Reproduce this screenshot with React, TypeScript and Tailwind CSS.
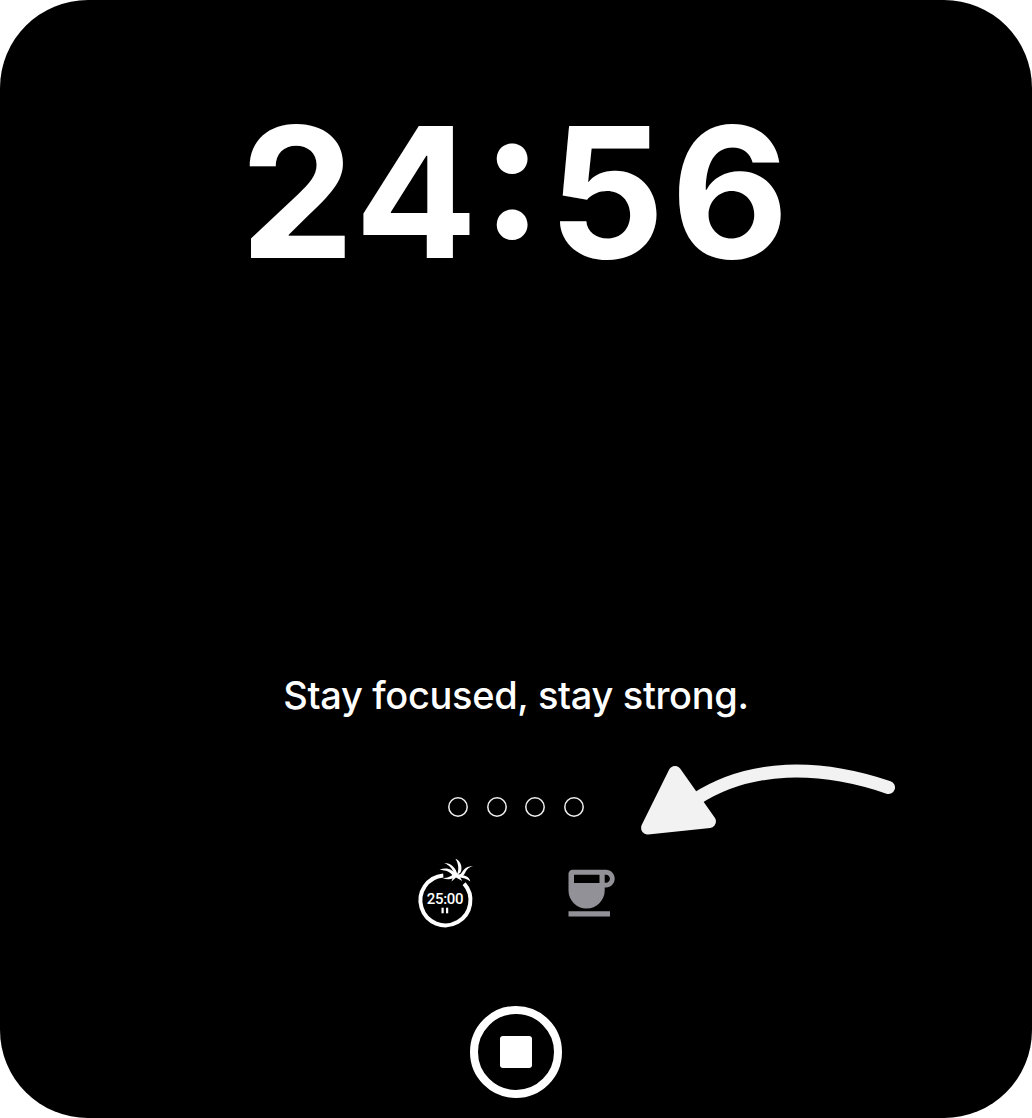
function TomatoIcon() {
  return (
    <svg className="overflow-visible" width="60" height="72" viewBox="415 857 60 72" fill="none" aria-hidden="true">
      <path d="M444.300 875.400A25 25 0 1 0 465.100 883.700" stroke="#fff" strokeWidth="4" />
      <g fill="#fff">
        <path d="M456.400 858.700C461 860 464.300 867 461.500 872.500L457.600 875.500C460.200 870 459.800 864 456.400 858.700Z" />
        <path d="M474.500 866.200C469 865.800 465.500 868 463.500 871.500C462 874 460 875.500 457 875.500L459 877.800C462.500 877.300 465 875.500 466.300 872.500C467.500 869.500 470 866.800 474.500 866.200Z" />
        <path d="M458.500 874.500C465 874.500 470.500 876.500 471.300 881.500C468 878.800 464 877.700 459.500 877.500Z" />
        <path d="M445 863C451.500 862.800 457 867.500 458.600 875L456 875C453.500 869 450.500 865 445 863Z" />
        <path d="M440.500 869.900C447 866.800 454 869 458.500 876L455 877C451.500 871.500 447 870 440.500 869.900Z" />
        <path d="M443.500 877.900C448.500 880 454 879.500 458 876L455 873.500C452 876.800 448 878.200 443.500 877.900Z" />
        <path d="M455 873.500L459 873.500L463.300 881L457 877.600L452.500 881.500Z" />
        <rect x="442.500" y="907.700" width="2.200" height="5.600" />
        <rect x="447" y="907.700" width="2.200" height="5.600" />
      </g>
      <text x="427.700" y="904.300" fill="#fff" fontFamily="Roboto, sans-serif" fontSize="15" fontWeight="500" letterSpacing="-0.3">25:00</text>
    </svg>
  );
}

function CupIcon() {
  return (
    <svg width="50" height="50" viewBox="566 867 50 50" aria-hidden="true">
      <path fill="#929197" fillRule="evenodd" d="M572.500 869.700H606C611 869.700 614.700 873.800 614.700 878.500C614.700 883.500 611 887.400 606 887.400H604.700V890.500C604.700 900.500 596.500 908.600 586.600 908.600C576.600 908.600 568.500 900.500 568.500 890.500V873.700C568.500 871.500 570.300 869.700 572.500 869.700ZM574 874.800V883H599.500V874.800ZM604.700 874.800V882.800H606C608.200 882.800 609.900 881 609.900 878.800C609.900 876.600 608.200 874.800 606 874.800Z" />
      <path fill="#929197" d="M568.500 911.200H610V916.600H568.500Z" />
    </svg>
  );
}

function Arrow() {
  return (
    <svg className="absolute left-[636px] top-[758px]" width="264" height="82" viewBox="636 758 264 82" fill="none" aria-hidden="true">
      <path d="M696 799C750 764 819 764 888.500 787.500" stroke="#f2f2f2" strokeWidth="13" strokeLinecap="round" />
      <path d="M675 772.500L647.500 828L709.500 821.500Z" fill="#f2f2f2" stroke="#f2f2f2" strokeWidth="13" strokeLinejoin="round" />
    </svg>
  );
}

export default function App() {
  return (
    <div className="h-[1118px] w-[1032px] overflow-hidden bg-white">
      <main className="relative flex h-full flex-col items-center rounded-[88px] bg-black font-['Inter',sans-serif] text-white">
        <h1 className="mr-[3px] mt-[102px] flex h-[180px] items-center whitespace-nowrap text-[182px] font-bold leading-[180px]">
          <span>2</span>
          <span className="mr-[4px]">4</span>
          <span className="mr-[6px] [font-feature-settings:'case']">:</span>
          <span className="mr-[6px]">5</span>
          <span>6</span>
        </h1>
        <p className="mt-[389px] h-12 whitespace-nowrap text-[38px] font-[450] leading-[48px] tracking-[-0.34px]">Stay focused, stay strong.</p>
        <div className="mt-[78px] flex gap-[18.500px]">
          {[0, 1, 2, 3].map((i) => (
            <svg key={i} className="size-5" viewBox="0 0 20 20" aria-hidden="true">
              <circle cx="10" cy="10" r="9.200" fill="none" stroke="#f0f0f0" strokeWidth="1.500" />
            </svg>
          ))}
        </div>
        <div className="mr-[2px] mt-10 flex h-[72px] w-[202px] items-start justify-between">
          <TomatoIcon />
          <div className="mt-[10px]"><CupIcon /></div>
        </div>
        <button aria-label="Stop timer" className="mr-px mt-[77px] flex size-[92px] items-center justify-center rounded-full border-8 border-white">
          <span className="size-8 rounded-[3px] bg-white" />
        </button>
        <Arrow />
      </main>
    </div>
  );
}
